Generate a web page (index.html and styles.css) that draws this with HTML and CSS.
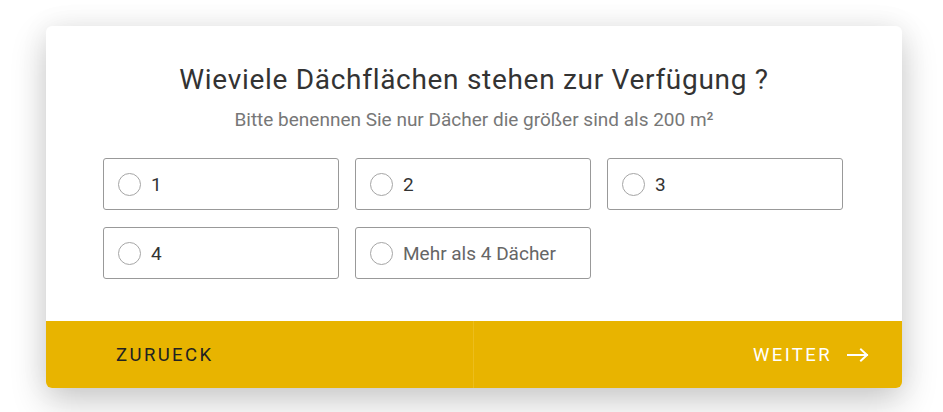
FILE: index.html
```html
<!DOCTYPE html>
<html lang="de">
<head>
<meta charset="utf-8">
<link rel="stylesheet" href="styles.css">
</head>
<body>
<div class="page">
  <div class="card">
    <div class="content">
      <h1 class="title">Wieviele Dächflächen stehen zur Verfügung ?</h1>
      <p class="subtitle">Bitte benennen Sie nur Dächer die größer sind als 200 m²</p>
      <div class="options">
        <label class="option"><span class="radio"></span><span class="label">1</span></label>
        <label class="option"><span class="radio"></span><span class="label">2</span></label>
        <label class="option"><span class="radio"></span><span class="label">3</span></label>
        <label class="option"><span class="radio"></span><span class="label">4</span></label>
        <label class="option"><span class="radio"></span><span class="label muted">Mehr als 4 Dächer</span></label>
      </div>
    </div>
    <div class="footer">
      <button class="btn back">ZURUECK</button>
      <button class="btn next">WEITER
        <svg class="arrow" width="22" height="14" viewBox="0 0 22 14" fill="none" stroke="#fff" stroke-width="2" stroke-linecap="square"><path d="M1 7H20M14 1.5L20 7L14 12.5"/></svg>
      </button>
    </div>
  </div>
</div>
</body>
</html>
```
FILE: styles.css
```css
html, body {
  margin: 0;
  padding: 0;
  background: #ffffff;
  font-family: Roboto, "Liberation Sans", sans-serif;
}
.page {
  padding: 26px 41px 24px 46px;
}
.card {
  width: 856px;
  background: #fff;
  border-radius: 6px;
  box-shadow: 0 14px 36px rgba(0,0,0,0.2), 0 0 30px rgba(0,0,0,0.06);
  overflow: hidden;
}
.content {
  padding: 36px 57px 42px 57px;
}
.title {
  margin: 0;
  text-align: center;
  font-weight: 400;
  font-size: 28px;
  line-height: 36px;
  color: #333;
  letter-spacing: 0.7px;
}
.subtitle {
  margin: 10px 0 0;
  text-align: center;
  font-size: 19px;
  line-height: 24px;
  color: #777;
}
.options {
  margin-top: 26px;
  display: grid;
  grid-template-columns: repeat(3, 236px);
  column-gap: 16px;
  row-gap: 17px;
}
.option {
  box-sizing: border-box;
  height: 52px;
  border: 1px solid #999;
  border-radius: 3px;
  display: flex;
  align-items: center;
  padding-left: 14px;
}
.radio {
  box-sizing: border-box;
  width: 23px;
  height: 23px;
  border: 1.5px solid #a5a5a5;
  border-radius: 50%;
  margin-right: 10px;
}
.label {
  font-size: 19px;
  color: #333;
}
.label.muted {
  color: #666;
}
.footer {
  display: grid;
  grid-template-columns: 1fr 1fr;
  height: 67px;
  background: #e8b400;
}
.btn {
  border: 0;
  background: transparent;
  font-family: Roboto, "Liberation Sans", sans-serif;
  font-size: 18.5px;
  letter-spacing: 2.4px;
  display: flex;
  align-items: center;
  cursor: pointer;
  padding: 0;
}
.back {
  color: #222;
  padding-left: 70px;
  border-right: 1px solid #ecbd1c;
}
.next {
  color: #fff;
  justify-content: flex-end;
  padding-right: 33px;
}
.arrow {
  margin-left: 15px;
}
```
